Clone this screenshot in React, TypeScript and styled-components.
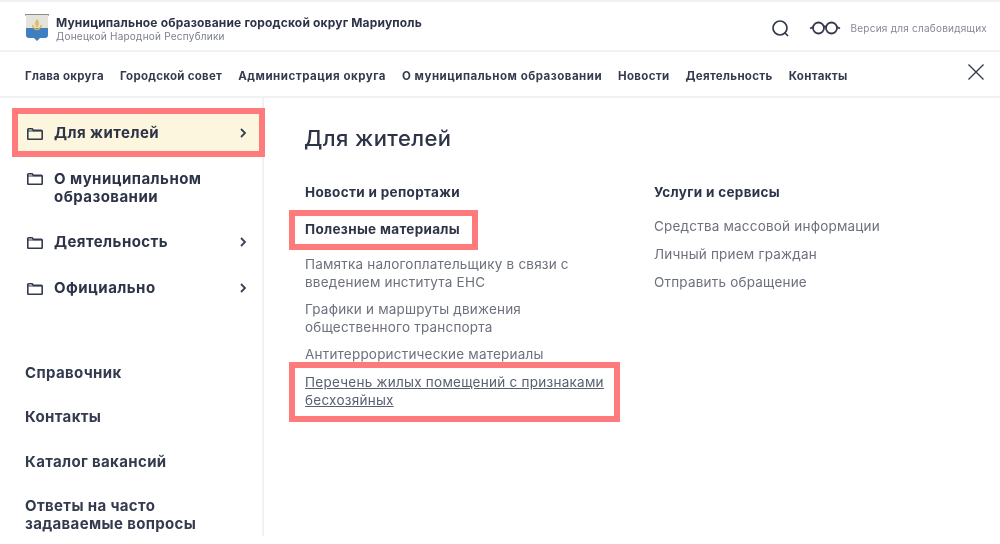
import React from "react";
import styled, { createGlobalStyle } from "styled-components";

const Global = createGlobalStyle`
  html, body { margin: 0; padding: 0; background: #fff; }
  body { font-family: Inter, "Noto Sans", "Liberation Sans", sans-serif; color: #2e3448; }
  * { box-sizing: border-box; }
`;
const Page = styled.div`
  width: 1000px; height: 544px; overflow: hidden; background: #fff;
  display: flex; flex-direction: column; filter: blur(0.4px);
`;
const Header = styled.header`
  height: 52px; border-top: 2px solid #f1f1f2; border-bottom: 2px solid #f1f1f2;
  display: flex; align-items: center; padding: 4px 13px 0 25px;
`;
const Brand = styled.div`
  display: flex; align-items: center; gap: 7px; flex: 1;
`;
const BrandText = styled.div`
  display: flex; flex-direction: column;
`;
const BrandTitle = styled.div`
  font-size: 12px; line-height: 15px; font-weight: 700; color: #2e3448; letter-spacing: 0.17px; white-space: nowrap;
`;
const BrandSub = styled.div`
  font-size: 10px; line-height: 12px; font-weight: 400; color: #7c808c; letter-spacing: 0.24px; white-space: nowrap;
`;
const Tools = styled.div`
  display: flex; align-items: center;
`;
const Vision = styled.span`
  font-size: 10px; color: #858995; margin-left: 9px; letter-spacing: 0.24px; white-space: nowrap;
`;
const SearchBtn = styled.span`
  display: flex; margin-right: 20px;
`;
const Nav = styled.nav`
  height: 46px; border-bottom: 2px solid #f1f1f2; display: flex; align-items: center;
  padding: 3px 16px 0 25px; gap: 16px;
`;
const NavLink = styled.a<{ $ls?: number }>`
  font-size: 11.5px; font-weight: 700; color: #353b4e; letter-spacing: ${p => p.$ls ?? 0.32}px; white-space: nowrap;
`;
const CloseBtn = styled.span`
  margin-left: auto; display: flex; margin-top: -7px;
`;
const Body = styled.div`
  display: flex; height: 438px;
`;
const Sidebar = styled.aside`
  width: 264px; border-right: 2px solid #f1f1f2; padding-top: 16px; display: flex; flex-direction: column;
`;
const SideItem = styled.a<{ $active?: boolean; $gap: number }>`
  display: flex; align-items: center; margin: 0 3px ${p => p.$gap}px 18px; padding: 0 12px 0 9px;
  height: ${p => (p.$active ? "37px" : "auto")};
  font-size: 15px; line-height: 18px; font-weight: 700; color: #2e3448; letter-spacing: 0.45px;
  ${p => p.$active && "background: #fdf6de; outline: 6px solid #ff7b7b;"}
`;
const SideIcon = styled.span<{ $top?: boolean }>`
  display: flex; width: 27px; flex: none; padding-top: 2px; ${p => p.$top && "align-self: flex-start; margin-top: 1px;"}
`;
const SideLabel = styled.span`
  flex: 1;
`;
const Plain = styled.a<{ $gap: number }>`
  display: block; margin: 0 0 ${p => p.$gap}px 25px;
  font-size: 15px; line-height: 18px; font-weight: 700; color: #353b4e; letter-spacing: 0.35px;
`;
const Main = styled.main`
  flex: 1; padding: 26px 0 0 41px;
`;
const Title = styled.h1`
  margin: 0 0 31px -1px; font-size: 22px; line-height: 28px; font-weight: 500; color: #2e3448; letter-spacing: 0.4px;
`;
const Columns = styled.div`
  display: flex;
`;
const Column = styled.div<{ $w: number }>`
  width: ${p => p.$w}px;
`;
const Heading = styled.div<{ $gap: number }>`
  font-size: 13.5px; line-height: 18px; font-weight: 700; color: #2e3448; letter-spacing: 0.32px;
  margin-bottom: ${p => p.$gap}px; white-space: nowrap;
`;
const MarkedHeading = styled(Heading)`
  width: fit-content; border: 6px solid #ff7b7b; padding: 4px 12px 6px 10px;
  margin-top: -10px; margin-left: -16px; margin-bottom: ${p => p.$gap - 12}px;
`;
const SubLink = styled.a<{ $gap: number }>`
  display: block; font-size: 13.5px; line-height: 18px; color: #6d717d; letter-spacing: 0.2px;
  margin-bottom: ${p => p.$gap}px;
`;
const MarkedLink = styled(SubLink)`
  width: fit-content; border: 6px solid #ff7b7b; padding: 5px 10px 7px;
  margin-top: -11px; margin-left: -16px;
  letter-spacing: 0.26px; color: #596072; text-decoration: underline;
`;

const Folder = () => (
  <svg width="16" height="12" viewBox="0 0 16 12" fill="none" stroke="#333a4d" strokeWidth="1.6" strokeLinejoin="round">
    <path d="M.8 10.6V1.6C.8 1.1 1.1.8 1.6.8h3.6l1.2 1.6h7.9c.5 0 .9.4.9.9v7.3c0 .4-.3.7-.7.7H1.5c-.4 0-.7-.3-.7-.7z" />
    <path d="M.8 3h14.4" strokeWidth="1" />
  </svg>
);
const Chevron = () => (
  <svg width="8" height="10" viewBox="0 0 8 10" fill="none" stroke="#3a4053" strokeWidth="1.8">
    <path d="M2 1l4 4-4 4" />
  </svg>
);
const Crest = () => (
  <svg width="24" height="28" viewBox="0 0 24 28">
    <rect x="0" y="0" width="24" height="1.6" fill="#8d8d8a" />
    <path d="M1 1h22v14H1z" fill="#e6e4da" />
    <path d="M1 14h22v7c0 2-1 3-3 3h-5l-3 3-3-3H4c-2 0-3-1-3-3z" fill="#3f7fc0" />
    <path d="M12 5c1.5 1.5 2 3 2 4.5S13.5 12 12 14c-1.5-2-2-3-2-4.5S10.5 6.500 12 5z" fill="#dfc069" />
    <path d="M7.500 11c1 3 2.500 4.500 4.500 4.500s3.500-1.500 4.500-4.500" fill="none" stroke="#d4b356" strokeWidth="1.3" />
  </svg>
);

export default function App() {
  return (
    <Page>
      <Global />
      <Header>
        <Brand>
          <Crest />
          <BrandText>
            <BrandTitle>Муниципальное образование городской округ Мариуполь</BrandTitle>
            <BrandSub>Донецкой Народной Республики</BrandSub>
          </BrandText>
        </Brand>
        <Tools>
          <SearchBtn>
            <svg width="17" height="17" viewBox="0 0 17 17" fill="none" stroke="#333a4d" strokeWidth="1.7">
              <circle cx="8" cy="8" r="7" />
              <path d="M12.500 12.500l3.500 3.500" />
            </svg>
          </SearchBtn>
          <svg width="32" height="14" viewBox="0 0 32 14" fill="none" stroke="#333a4d" strokeWidth="1.8">
            <circle cx="9.500" cy="7" r="5.500" />
            <circle cx="22.500" cy="7" r="5.500" />
            <path d="M15 6c.7-.8 1.300-.8 2 0M4 6L1 7.500M28 6l3 1.500" />
          </svg>
          <Vision>Версия для слабовидящих</Vision>
        </Tools>
      </Header>
      <Nav>
        <NavLink $ls={0.27}>Глава округа</NavLink>
        <NavLink $ls={0.27}>Городской совет</NavLink>
        <NavLink $ls={0.52}>Администрация округа</NavLink>
        <NavLink $ls={0.5}>О муниципальном образовании</NavLink>
        <NavLink>Новости</NavLink>
        <NavLink>Деятельность</NavLink>
        <NavLink>Контакты</NavLink>
        <CloseBtn>
          <svg width="16" height="16" viewBox="0 0 16 16" fill="none" stroke="#333a4d" strokeWidth="1.4">
            <path d="M.5.5l15 15M15.500.5l-15 15" />
          </svg>
        </CloseBtn>
      </Nav>
      <Body>
        <Sidebar>
          <SideItem $active $gap={19}>
            <SideIcon><Folder /></SideIcon>
            <SideLabel>Для жителей</SideLabel>
            <Chevron />
          </SideItem>
          <SideItem $gap={27}>
            <SideIcon $top><Folder /></SideIcon>
            <SideLabel>О муниципальном образовании</SideLabel>
          </SideItem>
          <SideItem $gap={28}>
            <SideIcon><Folder /></SideIcon>
            <SideLabel>Деятельность</SideLabel>
            <Chevron />
          </SideItem>
          <SideItem $gap={67}>
            <SideIcon><Folder /></SideIcon>
            <SideLabel>Официально</SideLabel>
            <Chevron />
          </SideItem>
          <Plain $gap={26}>Справочник</Plain>
          <Plain $gap={27}>Контакты</Plain>
          <Plain $gap={26}>Каталог вакансий</Plain>
          <Plain $gap={0}>Ответы на часто<br />задаваемые вопросы</Plain>
        </Sidebar>
        <Main>
          <Title>Для жителей</Title>
          <Columns>
            <Column $w={349}>
              <Heading $gap={19}>Новости и репортажи</Heading>
              <MarkedHeading $gap={17}>Полезные материалы</MarkedHeading>
              <SubLink $gap={9}>Памятка налогоплательщику в связи с<br />введением института ЕНС</SubLink>
              <SubLink $gap={9}>Графики и маршруты движения<br />общественного транспорта</SubLink>
              <SubLink $gap={10}>Антитеррористические материалы</SubLink>
              <MarkedLink $gap={0}>Перечень жилых помещений с признаками<br />бесхозяйных</MarkedLink>
            </Column>
            <Column $w={300}>
              <Heading $gap={16}>Услуги и сервисы</Heading>
              <SubLink $gap={10}>Средства массовой информации</SubLink>
              <SubLink $gap={10}>Личный прием граждан</SubLink>
              <SubLink $gap={0}>Отправить обращение</SubLink>
            </Column>
          </Columns>
        </Main>
      </Body>
    </Page>
  );
}
